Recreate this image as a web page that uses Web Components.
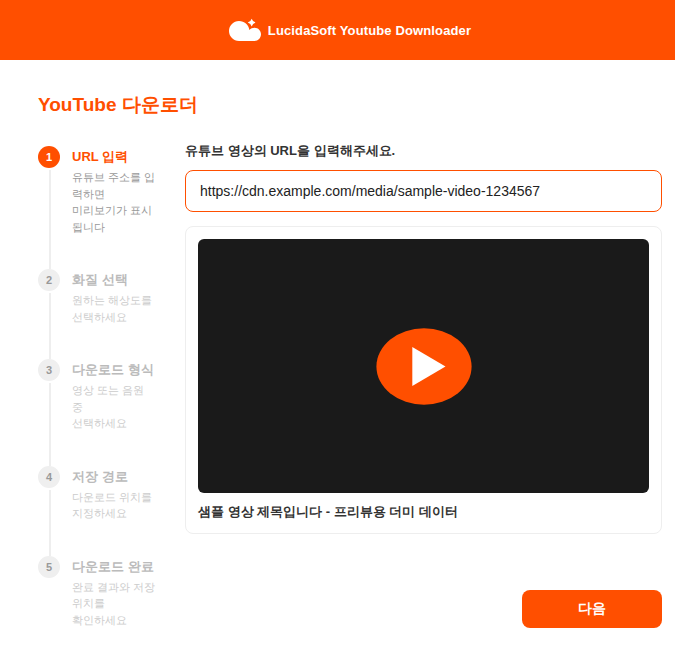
<!DOCTYPE html>
<html lang="ko">
<head>
<meta charset="utf-8">
<title>LucidaSoft Youtube Downloader</title>
<style>
html,body{margin:0;height:100%;background:#fff}
body{font-family:"Liberation Sans",sans-serif;color:#333;overflow:hidden}
</style>
</head>
<body>
<downloader-app></downloader-app>
<script>
const define = (name, html) => customElements.define(name, class extends HTMLElement {
  constructor() {
    super();
    const t = document.createElement('template');
    t.innerHTML = html;
    this.attachShadow({mode: 'open'}).append(t.content.cloneNode(true));
  }
});

define('brand-header', `<style>
:host{display:flex;height:60px;background:#ff4f00;color:#fff;align-items:center;justify-content:center;gap:7px;box-sizing:border-box;padding-left:25px}
svg{display:block;width:32px;height:24px}
span{font-weight:700;font-size:13px;line-height:20px;letter-spacing:.13px;padding-top:1px}
</style>
<svg viewBox="0 0 32 24" fill="#fff"><path d="M10 3C4.500 3 0 7.500 0 13C0 18.500 4.500 23 10 23H25.500C29.200 23 32 20 32 16.300C32 12.600 29.200 9.700 25.500 9.700C23.500 9.700 21.700 10.500 20.400 11.900C19.500 6.700 15.500 3 10 3Z"/><path d="M22.700 .8Q23.500 3.700 26.700 4.500Q23.500 5.300 22.700 8.500Q21.900 5.300 18.700 4.500Q21.900 3.700 22.700 .8Z"/></svg>
<span><slot></slot></span>`);

define('step-item', `<style>
:host{display:flex;gap:12px;color:#bbb;--dot:#efefef;--num:#999;--desc:#ccc}
:host([active]){color:#ff4f00;--dot:#ff4f00;--num:#fff;--desc:#999}
.rail{display:flex;flex-direction:column;align-items:center;width:22px;gap:2px}
.dot{flex:none;width:22px;height:22px;border-radius:50%;background:var(--dot);color:var(--num);font:700 11px/22px "Liberation Sans",sans-serif;text-align:center}
.line{flex:1;width:2px;margin-left:2px;background:#eee}
:host([last]) .line{display:none}
.body{flex:1;padding:2px 0 34px;min-width:0}
.title{font-size:13px;font-weight:700;line-height:18px}
.desc{font-size:11px;line-height:16.5px;color:var(--desc);margin-top:3px}
</style>
<div class="rail"><div class="dot"><slot name="n"></slot></div><div class="line"></div></div>
<div class="body"><div class="title"><slot name="title"></slot></div><div class="desc"><slot></slot></div></div>`);

define('url-field', `<style>
:host{display:block}
label{display:block;font-size:13px;font-weight:700;line-height:18px;color:#333}
.box{box-sizing:border-box;height:42px;margin-top:10px;border:1px solid #ff4f00;border-radius:8px;padding:0 14px;font-size:14px;line-height:40px;color:#222}
</style>
<label><slot name="label"></slot></label><div class="box"><slot></slot></div>`);

define('video-preview', `<style>
:host{display:block;box-sizing:border-box;border:1px solid #eee;border-radius:8px;padding:12px}
svg{display:block;width:100%;height:254px;border-radius:6px;background:#1a1a1a}
.title{font-size:13px;font-weight:700;line-height:19px;color:#333;margin-top:9px}
</style>
<svg viewBox="0 0 451 254"><ellipse cx="226" cy="127.500" rx="47.600" ry="38.200" fill="#ff4f00"/><path d="M214.300 108V147L247.500 127.500Z" fill="#fff"/></svg>
<div class="title"><slot></slot></div>`);

define('action-button', `<style>
:host{display:block}
button{display:block;width:140px;height:38px;border:0;border-radius:8px;padding:0 0 2px;background:#ff4f00;color:#fff;font:700 14px/36px "Liberation Sans",sans-serif}
</style><button><slot></slot></button>`);

define('downloader-app', `<style>
:host{display:block}
main{padding:34px 13px 0 38px}
h1{margin:0;font-size:19px;line-height:22px;font-weight:700;color:#ff4f00}
.cols{display:grid;grid-template-columns:118px 1fr;gap:29px;margin-top:26px}
.steps{display:flex;flex-direction:column;padding-top:4px}
.work{display:flex;flex-direction:column}
video-preview{margin-top:14px}
action-button{align-self:flex-end;margin-top:56px}
</style>
<brand-header>LucidaSoft Youtube Downloader</brand-header>
<main>
<h1>YouTube 다운로더</h1>
<div class="cols">
<div class="steps">
<step-item active><span slot="n">1</span><span slot="title">URL 입력</span>유튜브 주소를 입력하면<br>미리보기가 표시됩니다</step-item>
<step-item><span slot="n">2</span><span slot="title">화질 선택</span>원하는 해상도를<br>선택하세요</step-item>
<step-item><span slot="n">3</span><span slot="title">다운로드 형식</span>영상 또는 음원 중<br>선택하세요</step-item>
<step-item><span slot="n">4</span><span slot="title">저장 경로</span>다운로드 위치를<br>지정하세요</step-item>
<step-item last><span slot="n">5</span><span slot="title">다운로드 완료</span>완료 결과와 저장 위치를<br>확인하세요</step-item>
</div>
<div class="work">
<url-field><span slot="label">유튜브 영상의 URL을 입력해주세요.</span>https://cdn.example.com/media/sample-video-1234567</url-field>
<video-preview>샘플 영상 제목입니다 - 프리뷰용 더미 데이터</video-preview>
<action-button>다음</action-button>
</div>
</div>
</main>`);
</script>
</body>
</html>
